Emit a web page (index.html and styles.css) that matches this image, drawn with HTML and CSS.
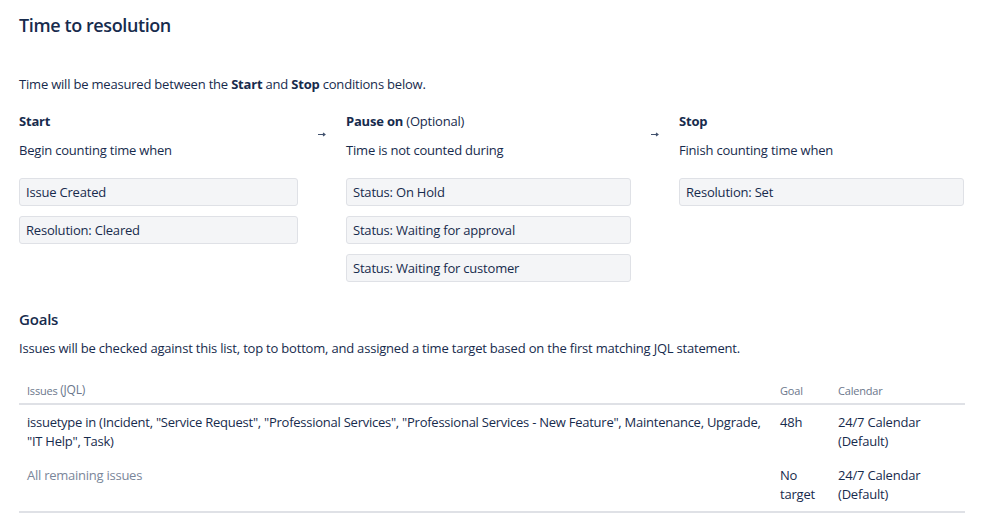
FILE: index.html
```html
<!DOCTYPE html>
<html>
<head>
<meta charset="utf-8">
<link rel="stylesheet" href="styles.css">
</head>
<body>
<div class="page">
  <h1 class="title">Time to resolution</h1>
  <p class="intro">Time will be measured between the <b>Start</b> and <b>Stop</b> conditions below.</p>

  <div class="flow">
    <div class="col">
      <div class="col-head"><b>Start</b></div>
      <div class="col-sub">Begin counting time when</div>
      <div class="boxes">
        <div class="box">Issue Created</div>
        <div class="box">Resolution: Cleared</div>
      </div>
    </div>
    <div class="arrow"><svg width="8" height="5" viewBox="0 0 8 5"><path d="M0 2.5H6.5M5 1L7 2.5L5 4" fill="none" stroke="#42526E" stroke-width="1.1"/></svg></div>
    <div class="col">
      <div class="col-head"><b>Pause on</b> (Optional)</div>
      <div class="col-sub">Time is not counted during</div>
      <div class="boxes">
        <div class="box">Status: On Hold</div>
        <div class="box">Status: Waiting for approval</div>
        <div class="box">Status: Waiting for customer</div>
      </div>
    </div>
    <div class="arrow"><svg width="8" height="5" viewBox="0 0 8 5"><path d="M0 2.5H6.5M5 1L7 2.5L5 4" fill="none" stroke="#42526E" stroke-width="1.1"/></svg></div>
    <div class="col">
      <div class="col-head"><b>Stop</b></div>
      <div class="col-sub">Finish counting time when</div>
      <div class="boxes">
        <div class="box">Resolution: Set</div>
      </div>
    </div>
  </div>

  <h2 class="goals-title">Goals</h2>
  <p class="goals-desc">Issues will be checked against this list, top to bottom, and assigned a time target based on the first matching JQL statement.</p>

  <table class="goals">
    <thead>
      <tr>
        <th class="c-issues">Issues <span class="jql">(JQL)</span></th>
        <th class="c-goal">Goal</th>
        <th class="c-cal">Calendar</th>
      </tr>
    </thead>
    <tbody>
      <tr>
        <td class="jql-cell">issuetype in (Incident, "Service Request", "Professional Services", "Professional Services - New Feature", Maintenance, Upgrade, "IT Help", Task)</td>
        <td>48h</td>
        <td>24/7 Calendar (Default)</td>
      </tr>
      <tr>
        <td class="jql-cell muted">All remaining issues</td>
        <td>No target</td>
        <td>24/7 Calendar (Default)</td>
      </tr>
    </tbody>
  </table>
</div>
</body>
</html>
```

FILE: styles.css
```css
html, body {
  margin: 0;
  padding: 0;
  background: #ffffff;
}
body {
  font-family: "Open Sans", "Noto Sans", sans-serif;
  font-size: 13px;
  letter-spacing: -0.2px;
  color: #172B4D;
}
.page {
  padding: 13px 34px 0 19px;
}
.title {
  margin: 0;
  font-size: 18px;
  line-height: 24px;
  font-weight: 600;
  letter-spacing: -0.4px;
  color: #172B4D;
}
.intro {
  margin: 37px 0 0;
  line-height: 20px;
}
.intro b, .col-head b {
  font-weight: 700;
}
.flow {
  display: grid;
  grid-template-columns: 279px 48px 285px 48px 285px;
  margin-top: 17px;
}
.col-head {
  line-height: 20px;
}
.col-sub {
  margin-top: 9px;
  line-height: 20px;
}
.boxes {
  margin-top: 18px;
  display: flex;
  flex-direction: column;
  gap: 10px;
}
.box {
  height: 28px;
  box-sizing: border-box;
  line-height: 26px;
  padding: 0 6px;
  background: #F4F5F7;
  border: 1px solid #DFE1E6;
  border-radius: 3px;
}
.arrow {
  display: flex;
  justify-content: center;
  margin-top: 21px;
  padding-right: 1px;
  height: 5px;
}
.arrow svg {
  display: block;
}
.goals-title {
  margin: 27px 0 0;
  font-size: 15px;
  line-height: 20px;
  font-weight: 600;
  letter-spacing: -0.2px;
}
.goals-desc {
  margin: 9px 0 0;
  line-height: 20px;
}
.goals {
  margin-top: 19px;
  width: 946px;
  border-collapse: collapse;
}
.goals th {
  text-align: left;
  font-weight: 400;
  font-size: 11px;
  color: #6B778C;
  padding: 5px 8px 3px;
  border-bottom: 2px solid #DFE1E6;
  line-height: 18px;
}
.goals th .jql {
  font-size: 12px;
  position: relative;
  top: -1px;
}
.c-goal { width: 42px; }
.c-cal { width: 119px; }
.goals td {
  vertical-align: top;
  padding: 8px 8px 8px;
  line-height: 18.5px;
}
.goals td.jql-cell {
  padding-right: 2px;
  letter-spacing: -0.25px;
}
.goals tbody tr:last-child td {
  border-bottom: 2px solid #DFE1E6;
}
.muted {
  color: #7A869A;
}
```
